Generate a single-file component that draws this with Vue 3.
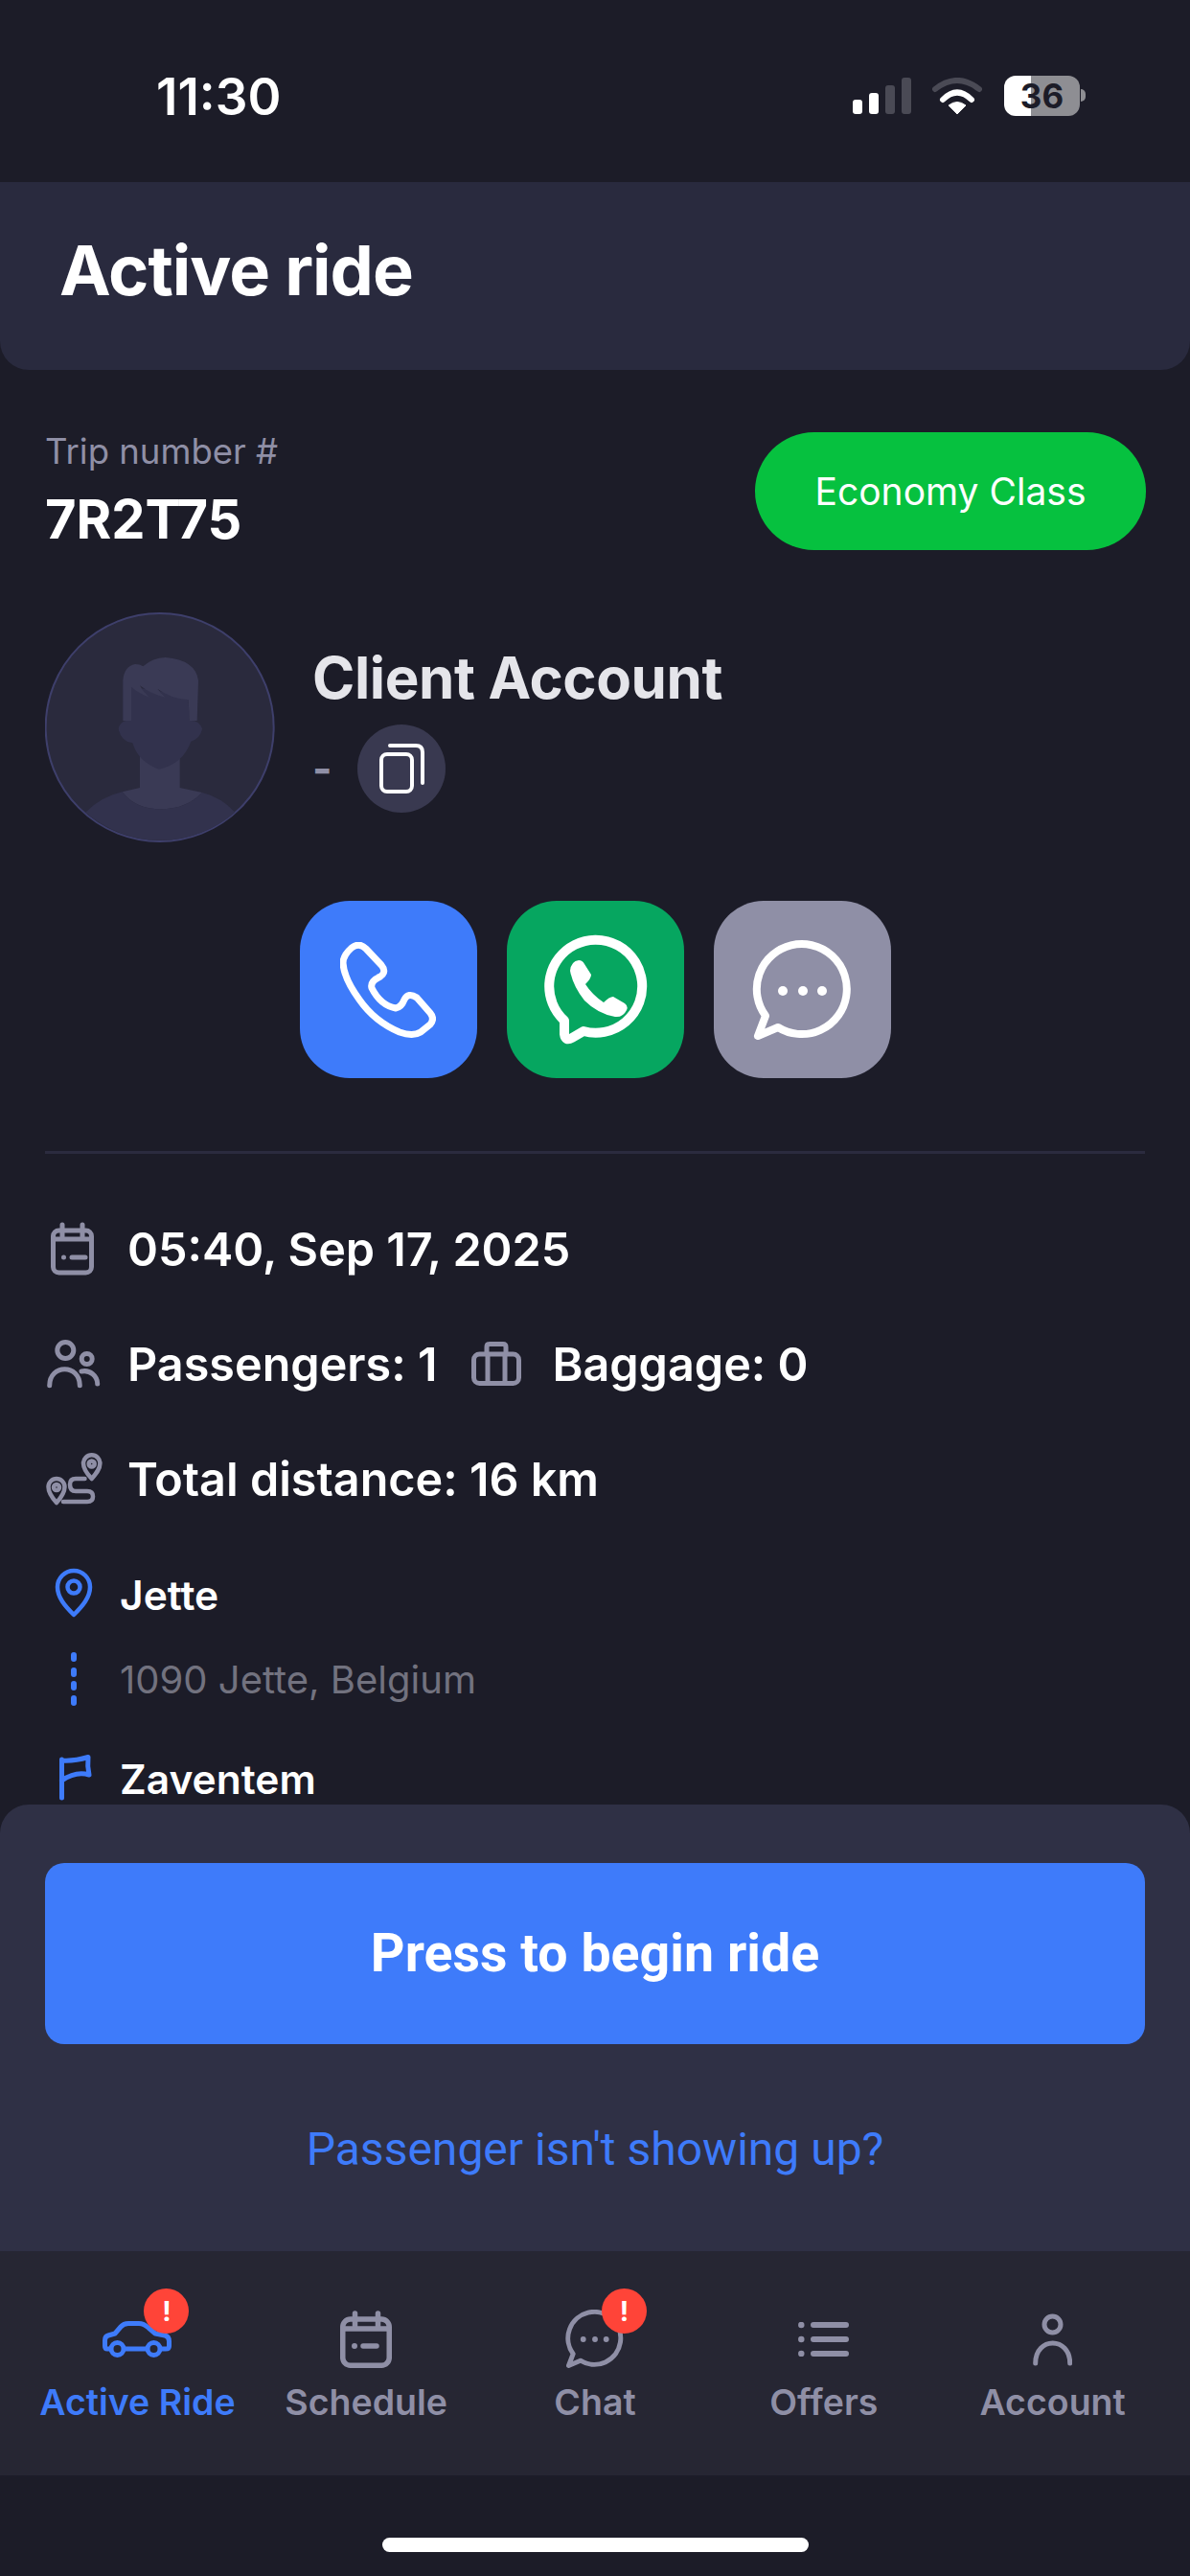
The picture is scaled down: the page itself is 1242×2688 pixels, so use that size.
<template>
  <div class="screen">
    <div class="status-bar">
      <span class="time">11:30</span>
      <div class="status-icons">
        <div class="signal">
          <i class="bar b1"></i>
          <i class="bar b2"></i>
          <i class="bar b3"></i>
          <i class="bar b4"></i>
        </div>
        <svg class="wifi" width="52" height="38" viewBox="0 0 52 38" fill="none">
          <path d="M3 12Q26 -6 49 12" stroke="#4a4a55" stroke-width="6" stroke-linecap="round" />
          <path d="M11 23Q26 8 41 23" stroke="#fff" stroke-width="6" stroke-linecap="round" />
          <path d="M26 38L17 29Q26 22 35 29Z" fill="#fff" stroke="#fff" stroke-width="1" stroke-linejoin="round" />
        </svg>
        <div class="battery"><span>36</span></div>
        <i class="battery-nub"></i>
      </div>
    </div>

    <header class="page-header">
      <h1>Active ride</h1>
    </header>

    <main class="content">
      <div class="trip-row">
        <div>
          <div class="trip-label">Trip number #</div>
          <div class="trip-number">7R2T75</div>
        </div>
        <div class="class-pill">Economy Class</div>
      </div>

      <div class="client-row">
        <svg class="avatar" width="240" height="240" viewBox="48 56 720 720">
          <circle cx="407" cy="416" r="357" fill="#2a2a3d" stroke="#3e3f6b" stroke-width="6" />
          <path d="M345 500V605L290 618Q330 672 410 672Q490 672 540 620L470 605V500Z" fill="#3a3a55" />
          <path d="M175 682Q225 632 290 618Q330 672 410 672Q490 672 540 620Q600 635 643 682A357 357 0 0 1 175 682Z" fill="#32324d" />
          <path d="M318 395Q285 390 278 420Q285 460 322 465Q340 525 405 547Q480 530 505 460Q535 450 540 420Q530 392 500 395L497 330L400 300L318 290Z" fill="#32324d" />
          <path d="M292 395V270Q295 225 330 218Q345 218 355 225Q385 198 425 197Q520 205 528 270L524 395H500L497 330Q440 325 400 295Q410 310 425 322Q385 315 345 285Q355 305 375 322Q345 312 318 290V395Z" fill="#3a3a55" />
        </svg>
        <div class="client-info">
          <div class="client-name">Client Account</div>
          <div class="client-phone">
            <span>-</span>
            <button class="copy-btn">
              <svg width="48" height="54" viewBox="0 0 48 54" fill="none" stroke="#fff" stroke-width="4">
                <rect x="3" y="12" width="32" height="39" rx="6" />
                <path d="M12 3H39Q46 3 46 10V42" stroke-linecap="round" />
              </svg>
            </button>
          </div>
        </div>
      </div>

      <div class="actions">
        <button class="action call">
          <svg width="100" height="100" viewBox="0 0 100 100" fill="none" stroke="#fff" stroke-width="7" stroke-linejoin="round">
            <path d="M12 6Q20 0 27 7L43 24Q49 31 42 36Q31 41 33 48Q42 66 58 69Q64 68 67 60Q71 52 80 58L94 74Q99 80 94 86L84 94Q76 99 62 94Q36 83 20 60Q4 38 3 22Q3 14 12 6Z" />
          </svg>
        </button>
        <button class="action whatsapp">
          <svg width="112" height="116" viewBox="-3 0 112 116">
            <path d="M41 101A48.5 48.5 0 1 0 21 90V104Q22 112 29 108Z" fill="none" stroke="#fff" stroke-width="10" stroke-linejoin="round" />
            <path d="M27 38Q28 28 36 27Q40 27 42 31L49 42Q49 46 43 52Q50 63 62 71Q68 65 72 65L84 72Q88 75 86 79Q82 87 74 86Q56 83 42 69Q30 54 27 38Z" fill="#fff" />
          </svg>
        </button>
        <button class="action message">
          <svg width="106" height="106" viewBox="-1 -1 106 106" fill="none">
            <path d="M27 91A47 47 0 1 0 14 79L6 100Z" stroke="#fff" stroke-width="8" stroke-linejoin="round" />
            <circle cx="32" cy="53" r="5" fill="#fff" />
            <circle cx="53" cy="53" r="5" fill="#fff" />
            <circle cx="73" cy="53" r="5" fill="#fff" />
          </svg>
        </button>
      </div>

      <div class="divider"></div>

      <div class="info-row first">
        <div class="info-icon">
          <svg width="60" height="56" viewBox="0 0 60 56" fill="none" stroke="#8f8fa6" stroke-width="5" stroke-linecap="round">
            <rect x="8.5" y="9" width="40" height="44" rx="6" />
            <path d="M18 3V15M39 3V15M9 18H48" />
            <path d="M28 37H42" />
            <circle cx="19.5" cy="37" r="1.5" fill="#8f8fa6" stroke-width="2" />
          </svg>
        </div>
        <span>05:40, Sep 17, 2025</span>
      </div>

      <div class="info-row">
        <div class="info-icon">
          <svg width="60" height="56" viewBox="0 0 60 56" fill="none" stroke="#8f8fa6" stroke-width="5" stroke-linecap="round">
            <circle cx="21.3" cy="14" r="8.5" />
            <circle cx="43.7" cy="23" r="5.5" />
            <path d="M4.7 50.7C4.7 28 36.3 28 36.3 50.7" />
            <path d="M38 36C47 34 54.7 41 54.7 49" />
          </svg>
        </div>
        <span>Passengers: 1</span>
        <svg class="bag" width="52" height="46" viewBox="0 0 52 46" fill="none" stroke="#8f8fa6" stroke-width="5">
          <rect x="2.5" y="13" width="47" height="30.5" rx="6" />
          <path d="M16 13V5.5Q16 2.5 19 2.5H33Q36 2.5 36 5.5V13M17 13V43M35 13V43" />
        </svg>
        <span>Baggage: 0</span>
      </div>

      <div class="info-row">
        <div class="info-icon">
          <svg width="60" height="56" viewBox="0 0 60 56" fill="none" stroke="#8f8fa6" stroke-width="4.5" stroke-linecap="round" stroke-linejoin="round">
            <path d="M48.7 28C44 23 40 18 40 12A8.7 8.7 0 0 1 57.4 12C57.4 18 53 23 48.7 28Z" />
            <circle cx="48.7" cy="12.5" r="3" />
            <path d="M12 53C7.5 48 3.5 43 3.5 36.5A8.5 8.5 0 0 1 20.5 36.5C20.5 43 16.5 48 12 53Z" />
            <circle cx="12" cy="37" r="3" />
            <path d="M41.5 28H32Q26 28 26 34Q26 41 32 41H44Q50 41 50 46.5Q50 52 44 52H19" />
          </svg>
        </div>
        <span>Total distance: 16 km</span>
      </div>

      <div class="route">
        <div class="route-row">
          <div class="info-icon">
            <svg width="44" height="52" viewBox="0 0 44 52" fill="none" stroke="#3e7bfa" stroke-width="4.5" stroke-linejoin="round">
              <path d="M22 49C13 40 5 31 5 20A17 17 0 0 1 39 20C39 31 31 40 22 49Z" />
              <circle cx="22" cy="20" r="6.5" />
            </svg>
          </div>
          <span class="stop-name">Jette</span>
        </div>
        <div class="route-row address">
          <div class="info-icon">
            <svg width="8" height="56" viewBox="0 0 8 56" fill="none" stroke="#3e7bfa" stroke-width="6" stroke-linecap="round">
              <path d="M4 3V7M4 19V23M4 33V37M4 48V53" />
            </svg>
          </div>
          <span>1090 Jette, Belgium</span>
        </div>
        <div class="route-row destination">
          <div class="info-icon">
            <svg width="60" height="52" viewBox="0 0 60 52" fill="none" stroke="#3e7bfa" stroke-width="5" stroke-linecap="round" stroke-linejoin="round">
              <path d="M17.5 8V48M17.5 9Q30 10 45 5.5Q44 15 46 24Q32 20 17.5 30" />
            </svg>
          </div>
          <span class="stop-name">Zaventem</span>
        </div>
      </div>
    </main>

    <section class="sheet">
      <button class="begin-btn">Press to begin ride</button>
      <button class="no-show">Passenger isn't showing up?</button>
    </section>

    <nav class="tabs">
      <div v-for="tab in tabs" :key="tab.label" class="tab" :class="{ active: tab.active }">
        <div class="tab-icon">
          <svg v-if="tab.icon === 'car'" width="72" height="38" viewBox="0 0 72 38" fill="none" stroke="currentColor" stroke-width="5" stroke-linejoin="round">
            <path d="M7 29H5Q2.5 29 2.5 26V20Q2.5 16 6 15L13 13L19 6Q22 2.5 27 2.5H38Q43 2.5 48 7L55 13L65 15Q69.5 16 69.5 21V26Q69.5 29 66 29H62M45 29H24" />
            <circle cx="15.5" cy="29" r="6.5" />
            <circle cx="53.5" cy="29" r="6.5" />
          </svg>
          <svg v-else-if="tab.icon === 'calendar'" width="54" height="60" viewBox="0 0 54 60" fill="none" stroke="currentColor" stroke-width="5.5" stroke-linecap="round">
            <rect x="2.75" y="9" width="48.5" height="48.25" rx="8" />
            <path d="M15.5 3V16M39.5 3V16M3 19H51M24 37H38" />
            <circle cx="15" cy="37" r="1.5" fill="currentColor" stroke-width="3" />
          </svg>
          <svg v-else-if="tab.icon === 'chat'" width="62" height="62" viewBox="0 0 106 106" fill="none">
            <path d="M27 91A47 47 0 1 0 14 79L6 100Z" stroke="currentColor" stroke-width="8.5" stroke-linejoin="round" />
            <circle cx="32" cy="53" r="5" fill="currentColor" />
            <circle cx="53" cy="53" r="5" fill="currentColor" />
            <circle cx="73" cy="53" r="5" fill="currentColor" />
          </svg>
          <svg v-else-if="tab.icon === 'list'" width="54" height="36" viewBox="0 0 54 36" fill="none" stroke="currentColor" stroke-width="6" stroke-linecap="round">
            <path d="M16 3H50M16 18H50M16 33H50" />
            <circle cx="3.3" cy="3" r="2" fill="currentColor" stroke-width="2.5" />
            <circle cx="3.3" cy="18" r="2" fill="currentColor" stroke-width="2.5" />
            <circle cx="3.3" cy="33" r="2" fill="currentColor" stroke-width="2.5" />
          </svg>
          <svg v-else width="41" height="55" viewBox="0 0 41 55" fill="none" stroke="currentColor" stroke-width="5" stroke-linecap="round">
            <circle cx="20.5" cy="11.5" r="8.5" />
            <path d="M2.7 52C2.7 24 38.7 24 38.7 52" />
          </svg>
          <span v-if="tab.alert" class="badge">!</span>
        </div>
        <span class="tab-label">{{ tab.label }}</span>
      </div>
    </nav>

    <div class="home-area">
      <div class="home-indicator"></div>
    </div>
  </div>
</template>

<script setup>
const tabs = [
  { label: 'Active Ride', icon: 'car', active: true, alert: true },
  { label: 'Schedule', icon: 'calendar' },
  { label: 'Chat', icon: 'chat', alert: true },
  { label: 'Offers', icon: 'list' },
  { label: 'Account', icon: 'person' },
]
</script>

<style>
html, body {
  margin: 0;
  background: #1c1c28;
}
</style>

<style scoped>
.screen {
  width: 1242px;
  height: 2688px;
  display: flex;
  flex-direction: column;
  overflow: hidden;
  background: #1c1c28;
  color: #fff;
  font-family: Inter, "Liberation Sans", sans-serif;
}
button {
  border: none;
  padding: 0;
  cursor: pointer;
}

.status-bar {
  height: 190px;
  flex: none;
  display: flex;
  align-items: flex-start;
  justify-content: space-between;
  box-sizing: border-box;
  padding: 70px 109px 0 163px;
}
.time {
  font-size: 53px;
  line-height: 62px;
  font-weight: 600;
}
.status-icons {
  display: flex;
  align-items: flex-start;
  padding-top: 11px;
}
.signal {
  display: flex;
  align-items: flex-end;
  gap: 6.5px;
  height: 38px;
}
.bar {
  width: 10.5px;
  border-radius: 3px;
  background: #fff;
}
.b1 { height: 15px; }
.b2 { height: 22px; }
.b3 { height: 30px; background: #4a4a55; }
.b4 { height: 38px; background: #4a4a55; }
.wifi {
  margin-left: 22px;
}
.battery {
  margin: -2px 0 0 23px;
  width: 79px;
  height: 42px;
  border-radius: 12px;
  display: flex;
  align-items: center;
  justify-content: center;
  background: linear-gradient(90deg, #fff 36%, #8e8e93 36%);
  color: #1c1c28;
  font-size: 35px;
  font-weight: 700;
}
.battery-nub {
  width: 5px;
  height: 13px;
  margin: 12px 0 0 1px;
  border-radius: 0 6px 6px 0;
  background: #8e8e93;
}

.page-header {
  height: 196px;
  flex: none;
  display: flex;
  align-items: center;
  box-sizing: border-box;
  padding: 0 0 14px 62px;
  border-radius: 0 0 30px 30px;
  background: #292a3e;
}
.page-header h1 {
  margin: 0;
  font-size: 72px;
  font-weight: 700;
  letter-spacing: -1px;
}

.content {
  flex: 1;
  min-height: 0;
  overflow: hidden;
  padding: 65px 47px 0;
}
.trip-row {
  display: flex;
  justify-content: space-between;
}
.trip-label {
  margin-top: -2px;
  font-size: 36.5px;
  line-height: 44px;
  color: #8f8fa6;
}
.trip-number {
  margin-top: 16px;
  font-size: 56px;
  line-height: 66px;
  font-weight: 700;
}
.class-pill {
  width: 408px;
  height: 123px;
  margin-right: -1px;
  border-radius: 62px;
  display: flex;
  align-items: center;
  justify-content: center;
  background: #06c13f;
  font-size: 39px;
}

.client-row {
  display: flex;
  margin-top: 64px;
  gap: 39px;
}
.avatar {
  flex: none;
}
.client-info {
  padding-top: 31px;
}
.client-name {
  font-size: 60px;
  line-height: 74px;
  font-weight: 700;
  letter-spacing: -0.4px;
  color: #e5e5ea;
}
.client-phone {
  display: flex;
  align-items: center;
  gap: 26px;
  margin-top: 12px;
  font-size: 44px;
  font-weight: 700;
  color: #8f8fa6;
}
.copy-btn {
  width: 92px;
  height: 92px;
  border-radius: 50%;
  display: flex;
  align-items: center;
  justify-content: center;
  background: #393950;
}

.actions {
  display: flex;
  justify-content: center;
  gap: 31px;
  margin-top: 61px;
}
.action {
  width: 185px;
  height: 185px;
  border-radius: 52px;
  display: flex;
  align-items: center;
  justify-content: center;
}
.call { background: #3e7bfa; }
.whatsapp { background: #06a660; }
.message { background: #8f8fa6; }

.divider {
  height: 3px;
  margin-top: 76px;
  background: #2b2b3f;
}

.info-row {
  display: flex;
  align-items: center;
  height: 56px;
  margin-top: 64px;
  font-size: 48.5px;
  font-weight: 600;
}
.info-row.first {
  margin-top: 71px;
}
.info-icon {
  width: 60px;
  flex: none;
  display: flex;
  justify-content: center;
  margin-right: 26px;
}
.bag {
  margin: 0 32px 0 36px;
}

.route {
  margin-top: 65px;
}
.route-row {
  display: flex;
  align-items: center;
  height: 52px;
  font-size: 42.5px;
  font-weight: 600;
}
.route-row .info-icon {
  margin-right: 18px;
}
.stop-name {
  padding-top: 5px;
}
.address {
  height: 56px;
  margin-top: 36px;
  font-size: 40px;
  font-weight: 400;
  color: #72727f;
}
.destination {
  margin-top: 48px;
}

.sheet {
  height: 466px;
  flex: none;
  box-sizing: border-box;
  padding: 61px 47px 0;
  display: flex;
  flex-direction: column;
  border-radius: 30px 30px 0 0;
  background: #2f3045;
  font-family: Roboto, "Liberation Sans", sans-serif;
}
.begin-btn {
  height: 189px;
  flex: none;
  border-radius: 20px;
  background: #3e7bfa;
  color: #fff;
  font-family: inherit;
  font-size: 55.5px;
  font-weight: 700;
}
.no-show {
  margin-top: 84px;
  background: none;
  color: #3e7bfa;
  font-family: inherit;
  font-size: 48px;
  line-height: 52px;
}

.tabs {
  height: 234px;
  flex: none;
  box-sizing: border-box;
  padding: 60px 24px 0;
  display: grid;
  grid-template-columns: repeat(5, 1fr);
  align-items: start;
  background: #262633;
}
.tab {
  display: flex;
  flex-direction: column;
  align-items: center;
  color: #8f8fa6;
}
.tab.active {
  color: #3e7bfa;
}
.tab-icon {
  position: relative;
  width: 100%;
  height: 64px;
  display: flex;
  align-items: center;
  justify-content: center;
}
.badge {
  position: absolute;
  top: -21px;
  left: 50%;
  margin-left: 7px;
  width: 47px;
  height: 47px;
  border-radius: 50%;
  display: flex;
  align-items: center;
  justify-content: center;
  background: #ff4438;
  color: #fff;
  font-size: 28px;
  font-weight: 700;
}
.tab-label {
  margin-top: 12px;
  font-size: 37.5px;
  line-height: 44px;
  font-weight: 600;
}

.home-area {
  height: 105px;
  flex: none;
}
.home-indicator {
  width: 445px;
  height: 15px;
  margin: 65px auto 0;
  border-radius: 8px;
  background: #fff;
}
</style>
